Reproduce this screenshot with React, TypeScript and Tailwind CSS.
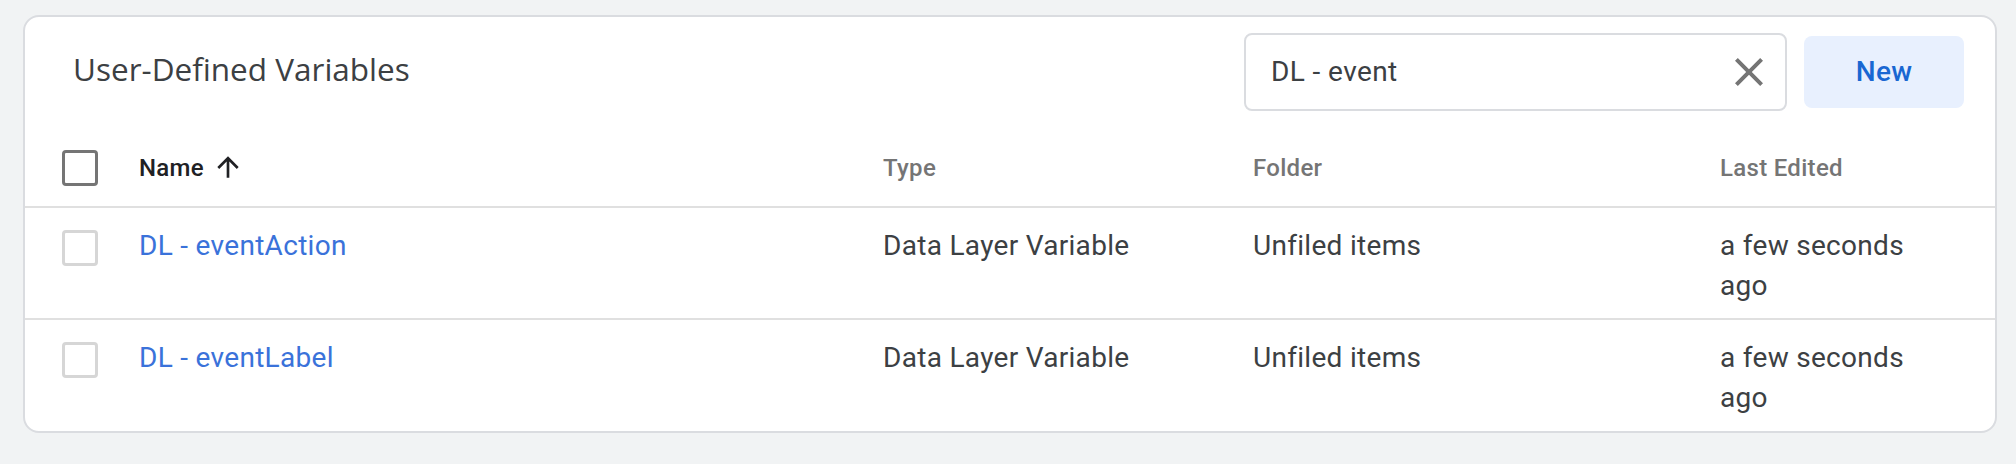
import React from "react";

const rows = [
  { name: "DL - eventAction", type: "Data Layer Variable", folder: "Unfiled items", edited: "a few seconds ago" },
  { name: "DL - eventLabel", type: "Data Layer Variable", folder: "Unfiled items", edited: "a few seconds ago" },
];

function Box({ dark }: { dark?: boolean }) {
  return (
    <div
      className={
        "w-[36px] h-[36px] rounded-[4px] border-[3px] " +
        (dark ? "border-[#757575]" : "border-[#d6d6d6]")
      }
    />
  );
}

export default function App() {
  return (
    <div className="w-[2016px] h-[464px] bg-[#f1f3f4] pt-[15px] pl-[23px]" style={{ fontFamily: "Roboto, 'Liberation Sans', sans-serif" }}>
      <div className="w-[1974px] h-[418px] bg-white border-2 border-[#dadce0] rounded-[16px] overflow-hidden flex flex-col">
        {/* top bar */}
        <div className="h-[110px] flex items-center pl-[48px] pr-[31px] shrink-0">
          <div
            className="text-[31.5px] text-[#3c4043] -mt-[6px]"
            style={{ fontFamily: "'Open Sans', Roboto, sans-serif" }}
          >
            User-Defined Variables
          </div>
          <div className="flex-1" />
          <div className="w-[543px] h-[78px] border-2 border-[#dadce0] rounded-[8px] flex items-center pl-[25px] pr-[12px]">
            <div className="flex-1 text-[28px] tracking-[0.4px] text-[#3c4043]">DL - event</div>
            <svg width="48" height="48" viewBox="0 0 24 24" className="text-[#757575]">
              <path
                fill="currentColor"
                d="M19 6.41 17.59 5 12 10.59 6.41 5 5 6.41 10.59 12 5 17.59 6.41 19 12 13.41 17.59 19 19 17.59 13.41 12z"
              />
            </svg>
          </div>
          <div className="ml-[17px] w-[160px] h-[72px] rounded-[8px] bg-[#e8f0fe] flex items-center justify-center text-[28px] font-medium tracking-[0.3px] text-[#1967d2]">
            New
          </div>
        </div>

        {/* header */}
        <div className="h-[81px] shrink-0 flex items-center border-b-2 border-[#e0e0e0] pt-[2px] tracking-[0.3px]">
          <div className="w-[114px] pl-[37px] shrink-0">
            <Box dark />
          </div>
          <div className="w-[744px] shrink-0 flex items-center text-[24px] leading-[32px] font-medium text-[#202124]">
            Name
            <svg width="32" height="32" viewBox="0 0 24 24" className="ml-[8px] -mt-[2px] text-[#202124]">
              <path fill="currentColor" d="M4 12l1.41 1.41L11 7.83V20h2V7.83l5.58 5.59L20 12l-8-8-8 8z" />
            </svg>
          </div>
          <div className="w-[370px] shrink-0 text-[24px] leading-[32px] font-medium text-[#757575]">Type</div>
          <div className="w-[467px] shrink-0 text-[24px] leading-[32px] font-medium text-[#757575]">Folder</div>
          <div className="shrink-0 text-[24px] leading-[32px] font-medium text-[#757575]">Last Edited</div>
        </div>

        {/* rows */}
        {rows.map((r, i) => (
          <div
            key={r.name}
            className={
              "flex items-start pt-[18px] shrink-0 tracking-[0.3px] " +
              (i < rows.length - 1 ? "pb-[12px] border-b-2 border-[#e0e0e0]" : "pb-[12px]")
            }
          >
            <div className="w-[114px] pl-[37px] pt-[4px] shrink-0">
              <Box />
            </div>
            <div className="w-[744px] shrink-0 text-[28px] leading-[40px] text-[#3a72da]">{r.name}</div>
            <div className="w-[370px] shrink-0 text-[28px] leading-[40px] text-[#3c4043]">{r.type}</div>
            <div className="w-[467px] shrink-0 text-[28px] leading-[40px] text-[#3c4043]">{r.folder}</div>
            <div className="w-[225px] shrink-0 text-[28px] leading-[40px] text-[#3c4043]">{r.edited}</div>
          </div>
        ))}
      </div>
    </div>
  );
}
